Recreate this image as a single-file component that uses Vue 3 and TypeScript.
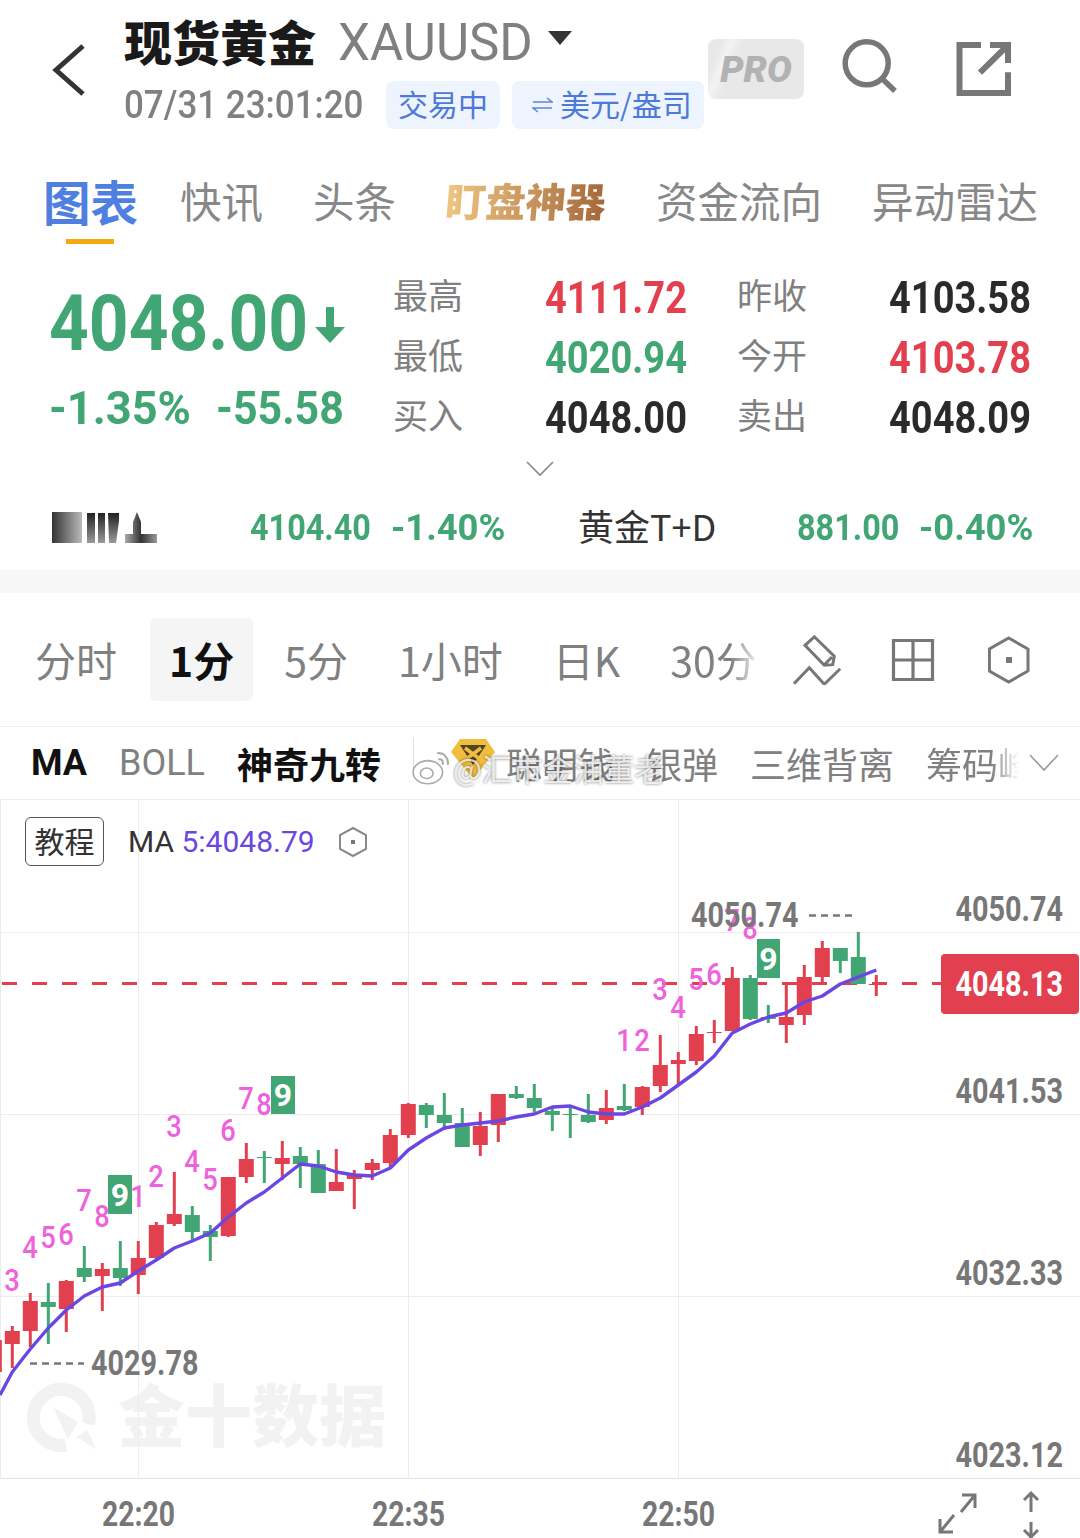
<template>
  <div class="page">
    <header class="head">
      <svg class="back" width="34" height="52" viewBox="0 0 34 52"><path d="M31 2 4 26l27 24" fill="none" stroke="#333" stroke-width="5" /></svg>
      <div class="head-main">
        <div class="title-row">
          <span class="title">现货黄金</span>
          <span class="symbol">XAUUSD</span>
          <i class="caret"></i>
        </div>
        <div class="sub-row">
          <span class="time-wrap"><span class="time">07/31 23:01:20</span></span>
          <span class="tag first">交易中</span>
          <span class="tag second">
            <svg width="21" height="16" viewBox="0 0 21 16"><path d="M1 5h19l-5-4M20 11H1l5 4" fill="none" stroke="#5f84d8" stroke-width="1.6" /></svg>
            美元/盎司
          </span>
        </div>
      </div>
      <div class="pro"><span>PRO</span></div>
      <svg class="act-search" width="56" height="54" viewBox="842 39 56 54"><circle cx="866.7" cy="63.3" r="21.5" fill="none" stroke="#777" stroke-width="5.5" /><path d="M881.7 78.3 895 91" stroke="#777" stroke-width="5.5" fill="none" /></svg>
      <svg class="act-share" width="56" height="54" viewBox="956 42 56 54"><path d="M981 45h-21.5v48H1008V72.3" fill="none" stroke="#777" stroke-width="6" /><path d="M980 72.7 1005 48M990 45h18v18" fill="none" stroke="#777" stroke-width="6" /></svg>
    </header>

    <nav class="tabs">
      <span class="tab active">图表</span>
      <span class="tab">快讯</span>
      <span class="tab">头条</span>
      <span class="tab gold">盯盘神器</span>
      <span class="tab">资金流向</span>
      <span class="tab">异动雷达</span>
    </nav>

    <section class="quote">
      <div class="price-box din-font">
        <div class="price">
          <span class="price-num">4048.00</span>
          <svg width="30" height="36" viewBox="0 0 30 36"><path d="M11 0h8v20h11L15 36 0 20h11z" fill="#41a673" /></svg>
        </div>
        <div class="change"><span class="pct">-1.35%</span><span class="amt">-55.58</span></div>
      </div>
      <div class="stats">
        <template v-for="s in stats" :key="s.label">
          <span class="s-label">{{ s.label }}</span>
          <span class="s-value din-font" :class="s.tone">{{ s.value }}</span>
        </template>
      </div>
    </section>

    <div class="more">
      <svg width="28" height="16" viewBox="0 0 28 16"><path d="m1 1 13 13L27 1" fill="none" stroke="#888" stroke-width="1.6" /></svg>
    </div>

    <section class="related">
      <svg class="blur-name" width="106" height="36" viewBox="0 0 106 36">
        <defs>
          <linearGradient id="b1" x1="0" x2="1" y1="0" y2="0"><stop offset="0" stop-color="#333" /><stop offset="1" stop-color="#bbb" /></linearGradient>
          <linearGradient id="b2" x1="0" x2="0" y1="0" y2="1"><stop offset="0" stop-color="#222" /><stop offset="1" stop-color="#999" /></linearGradient>
          <linearGradient id="b3" x1="0" x2="1" y1="0" y2="0"><stop offset="0" stop-color="#aaa" /><stop offset=".5" stop-color="#333" /><stop offset="1" stop-color="#999" /></linearGradient>
        </defs>
        <rect x="0" y="2" width="30" height="31" fill="url(#b1)" />
        <path d="M35 3h8v30h-8zM46 3h7v30h-7zM56 3h11v8l-3 22h-7z" fill="url(#b2)" />
        <path d="M73 33V24h8V12l4-10 4 10v12h16v9z" fill="url(#b3)" />
      </svg>
      <span class="r-num din-font first-num">4104.40</span>
      <span class="r-pct din-font">-1.40%</span>
      <span class="r-name">黄金T+D</span>
      <span class="r-num din-font second-num">881.00</span>
      <span class="r-pct din-font">-0.40%</span>
    </section>

    <div class="band"></div>

    <section class="periods">
      <span class="period">分时</span>
      <span class="period active">1分</span>
      <span class="period">5分</span>
      <span class="period">1小时</span>
      <span class="period">日K</span>
      <span class="period fade">30分</span>
      <svg class="t-pen" width="48" height="50" viewBox="792 633 48 50"><path d="M813.3 634.8 804 643.3l19.3 20 8.4-.6 1.6-8.4zM831 655l-7 7" fill="none" stroke="#777" stroke-width="3" /><path d="m793 681.7 15.3-16 15 16.6 16-15.6" fill="none" stroke="#777" stroke-width="3" /></svg>
      <svg class="t-grid" width="44" height="44" viewBox="890 638 44 44"><path d="M892.5 640.5h39v39h-39zM912 640.5v39M892.5 660h39" fill="none" stroke="#777" stroke-width="3.2" /></svg>
      <svg class="t-hex" width="42" height="48" viewBox="987 636 42 48"><path d="M1007.7 638 1027 649v22l-19.3 11-19.3-11v-22z" fill="none" stroke="#777" stroke-width="3" /><rect x="1005" y="657" width="6" height="6" fill="#777" /></svg>
    </section>

    <section class="indicators">
      <span class="ind strong latin">MA</span>
      <span class="ind latin">BOLL</span>
      <span class="ind strong">神奇九转</span>
      <i class="sep"></i>
      <svg class="medal" width="46" height="42" viewBox="0 0 46 42"><path d="M10 1h26l9 13-22 27L1 14z" fill="#f1bd3c" /><path d="M10 7h26l-13 20z" fill="#4f4426" /><path d="m15 10 16 12M31 10 15 22" stroke="#f1bd3c" stroke-width="3.5" /></svg>
      <span class="ind smart">聪明钱</span>
      <span class="ind">银弹</span>
      <span class="ind">三维背离</span>
      <span class="ind fade">筹码峰</span>
      <svg class="ind-more" width="30" height="18" viewBox="0 0 30 18"><path d="m1 1 14 15L29 1" fill="none" stroke="#999" stroke-width="1.6" /></svg>
      <div class="weibo">
        <svg width="40" height="36" viewBox="0 0 38 34"><ellipse cx="15" cy="21" rx="14" ry="11" fill="#fff" fill-opacity=".8" stroke="#aaa" stroke-width="1.5" /><ellipse cx="14" cy="22" rx="6" ry="5" fill="none" stroke="#aaa" stroke-width="1.5" /><path d="M24 3c6-1 11 4 10 11M25 9c3-1 5 1 4 5" fill="none" stroke="#aaa" stroke-width="2" /></svg>
        <span>@汇市金油董老</span>
      </div>
    </section>

    <section class="chart">
      <svg width="1080" height="738" viewBox="0 800 1080 738">
        <!-- watermark -->
        <path d="M88.5 1424A28 28 0 1 0 66 1445" fill="none" stroke="#f2f2f2" stroke-width="13" />
        <path d="M53 1407 78 1422l-10 17zM77 1437l10-7 10 20z" fill="#f2f2f2" />
        <text x="118" y="1441" class="mark">金十数据</text>

        <!-- grid -->
        <path v-for="y in hLines" :key="y" :d="`M0 ${y}H1080`" class="grid" />
        <path v-for="x in vLines" :key="x" :d="`M${x} 800V1478`" class="grid" />
        <path d="M0 1478.5H1080" class="axis" />

        <!-- price line -->
        <path d="M0 983.5H941" class="last-line" />

        <!-- candles -->
        <g v-for="(c, i) in candles" :key="i" :fill="c.up ? red : green" :stroke="c.up ? red : green">
          <path :d="`M${c.x} ${c.high}V${c.low}`" stroke-width="3" fill="none" />
          <rect :x="c.x - 7.5" :y="c.top" width="15" :height="Math.max(c.bottom - c.top, 1)" stroke="none" />
        </g>
        <path :d="maPath" fill="none" stroke="#6a46e2" stroke-width="3.4" stroke-linejoin="round" />

        <!-- nine turn marks -->
        <text v-for="(n, i) in marks" :key="'m' + i" :x="n[1]" :y="n[2]" class="mark-num">{{ n[0] }}</text>
        <g v-for="b in nines" :key="b.x">
          <rect :x="b.x" :y="b.y" :width="b.w" :height="b.h" :fill="green" />
          <text :x="b.x + b.w / 2" :y="b.y + b.h / 2 + 11" class="nine">9</text>
        </g>

        <!-- high low -->
        <text x="691" y="927" class="price-label">4050.74</text>
        <path d="M809 915.5h44" class="lead" />
        <path d="M30 1363.5h54" class="lead" />
        <text x="91" y="1375" class="price-label">4029.78</text>

        <!-- y axis -->
        <text v-for="l in yLabels" :key="l[0]" x="1063" :y="l[1]" class="y-label">{{ l[0] }}</text>
        <rect x="941" y="954" width="138" height="60" rx="4" :fill="red" />
        <text x="1063" y="996" class="y-label last-price">4048.13</text>

        <!-- x axis -->
        <text v-for="l in xLabels" :key="l[0]" :x="l[1]" y="1526" class="x-label">{{ l[0] }}</text>
        <path d="M940 1532 954 1515M940 1519v13h13M975 1495l-14 17M962 1495h13v13" fill="none" stroke="#777" stroke-width="3" />
        <path d="M1031 1512V1493M1024 1500l7-7 7 7M1031 1522v16M1024 1530l7 7 7-7" fill="none" stroke="#777" stroke-width="3" />
      </svg>
      <div class="legend">
        <span class="lesson"><span>教程</span></span>
        <span class="ma-text">MA <b>5:4048.79</b></span>
        <svg width="30" height="32" viewBox="0 0 30 32"><path d="M15 2 28 9v14l-13 7-13-7V9z" fill="none" stroke="#888" stroke-width="2" /><rect x="13" y="14" width="4" height="4" fill="#777" /></svg>
      </div>
    </section>
  </div>
</template>

<script setup lang="ts">
import { computed } from 'vue'

const red = '#e2404f'
const green = '#41a673'

const stats = [
  { label: '最高', value: '4111.72', tone: 'up' },
  { label: '昨收', value: '4103.58', tone: '' },
  { label: '最低', value: '4020.94', tone: 'down' },
  { label: '今开', value: '4103.78', tone: 'up' },
  { label: '买入', value: '4048.00', tone: '' },
  { label: '卖出', value: '4048.09', tone: '' },
]

const hLines = [932.5, 1114.5, 1296.5]
const vLines = [0.5, 138.5, 408.5, 678.5]

// [up, high, bodyTop, bodyBottom, low], one per minute, 18px apart
const raw: [number, number, number, number, number][] = [
  [1, 1326, 1331, 1344, 1368], [1, 1293, 1301, 1331, 1347], [0, 1283, 1302, 1307, 1344],
  [1, 1280, 1281, 1309, 1332], [0, 1246, 1268, 1277, 1282], [1, 1263, 1269, 1276, 1311],
  [0, 1241, 1268, 1278, 1286], [1, 1241, 1258, 1275, 1294], [1, 1222, 1225, 1258, 1260],
  [1, 1172, 1214, 1224, 1226], [0, 1206, 1215, 1232, 1240], [0, 1225, 1231, 1237, 1261],
  [1, 1177, 1177, 1236, 1237], [1, 1143, 1159, 1177, 1183], [0, 1151, 1157, 1158, 1183],
  [1, 1141, 1158, 1164, 1180], [0, 1147, 1156, 1164, 1188], [0, 1150, 1164, 1193, 1193],
  [1, 1149, 1182, 1191, 1191], [1, 1170, 1175, 1179, 1209], [1, 1159, 1163, 1170, 1180],
  [1, 1129, 1135, 1163, 1167], [1, 1103, 1104, 1135, 1138], [0, 1103, 1105, 1115, 1128],
  [0, 1093, 1115, 1123, 1130], [0, 1108, 1123, 1147, 1147], [1, 1112, 1126, 1145, 1156],
  [1, 1094, 1094, 1125, 1142], [0, 1086, 1094, 1098, 1099], [0, 1084, 1098, 1108, 1112],
  [0, 1107, 1111, 1115, 1131], [0, 1107, 1114, 1115, 1138], [0, 1094, 1115, 1122, 1123],
  [1, 1090, 1108, 1120, 1124], [0, 1084, 1106, 1110, 1111], [1, 1086, 1087, 1107, 1115],
  [1, 1035, 1065, 1086, 1092], [1, 1052, 1060, 1064, 1085], [1, 1026, 1034, 1061, 1065],
  [1, 1020, 1032, 1033, 1043], [1, 967, 978, 1031, 1031], [0, 975, 978, 1019, 1020],
  [0, 1005, 1017, 1019, 1023], [1, 984, 1017, 1025, 1043], [1, 965, 977, 1015, 1025],
  [1, 941, 948, 977, 982], [0, 948, 948, 961, 973], [0, 932, 957, 984, 984],
  [1, 975, 984, 985, 996],
]

const candles = [
  { up: true, x: -5.7, high: 1340, top: 1340, bottom: 1372, low: 1372 },
  ...raw.map((r, i) => ({ up: r[0] === 1, x: 12.3 + i * 18, high: r[1], top: r[2], bottom: r[3], low: r[4] })),
]

const ma = [
  1372, 1349, 1328, 1310, 1296, 1287, 1283, 1271, 1260, 1248, 1241, 1233, 1217, 1203, 1192, 1178,
  1164, 1166, 1172, 1175, 1176, 1168, 1150, 1138, 1128, 1125, 1123, 1121, 1117, 1114, 1107, 1106,
  1112, 1114, 1114, 1107, 1098, 1085, 1072, 1056, 1033, 1024, 1017, 1013, 1002, 996, 984, 977, 970,
]

const maPath = computed(() =>
  'M0 1395 ' + ma.map((y, i) => `L${(12.3 + i * 18).toFixed(1)} ${y}`).join(' ')
)

const marks: [string, number, number][] = [
  ['3', 12, 1291], ['4', 30, 1258], ['5', 48, 1248], ['6', 66, 1245], ['7', 84, 1211], ['8', 102, 1227],
  ['1', 138, 1207], ['2', 156, 1187], ['3', 174, 1137], ['4', 192, 1172], ['5', 210, 1190], ['6', 228, 1141],
  ['7', 246, 1109], ['8', 264, 1115], ['1', 624, 1051], ['2', 642, 1051], ['3', 660, 1000], ['4', 678, 1018],
  ['5', 696, 990], ['6', 714, 985], ['7', 732, 931], ['8', 750, 939],
]

const nines = [
  { x: 108, y: 1175, w: 24, h: 39 },
  { x: 271, y: 1076, w: 24, h: 38 },
  { x: 757, y: 939, w: 23, h: 39 },
]

const yLabels: [string, number][] = [['4050.74', 921], ['4041.53', 1103], ['4032.33', 1285], ['4023.12', 1467]]
const xLabels: [string, number][] = [['22:20', 138.5], ['22:35', 408.5], ['22:50', 678.5]]
</script>

<style>
html, body { margin: 0; background: #fff; }
</style>

<style scoped>
.page {
  width: 1080px; height: 1538px; overflow: hidden; background: #fff;
  font-family: "Noto Sans CJK SC", sans-serif; color: #222;
}
.din-font { font-family: Roboto, sans-serif; font-weight: 700; }

.head { height: 150px; box-sizing: border-box; display: flex; align-items: flex-start; }
.back { margin: 44px 0 0 52px; }
.head-main { margin-left: 38px; width: 584px; }
.title-row { display: flex; align-items: center; height: 62px; margin-top: 9px; }
.title { font-size: 48px; font-weight: 900; color: #1a1a1a; line-height: 62px; }
.symbol { font-family: Roboto, sans-serif; font-size: 51px; color: #808080; margin: 4px 0 0 22px; }
.caret { width: 0; height: 0; margin: -4px 0 0 15px; border: 12px solid transparent; border-top: 14px solid #333; border-bottom: 0; }
.sub-row { display: flex; align-items: center; margin-top: 10px; height: 48px; }
.time-wrap { width: 262px; flex: none; }
.time {
  display: inline-block; font-family: Roboto, sans-serif; font-size: 38px; font-weight: 500; color: #808080;
  white-space: nowrap; transform: scaleX(.92); transform-origin: left;
}
.tag {
  height: 48px; box-sizing: border-box; padding: 0 12px 4px; border-radius: 8px; background: #eef4fe;
  color: #4d79d8; font-size: 30px; display: flex; align-items: center; white-space: nowrap;
}
.tag.second { margin-left: 12px; padding-left: 20px; gap: 7px; padding-right: 12px; }
.tag svg { margin-top: 4px; }
.pro {
  margin: 39px 0 0 0; width: 96px; height: 60px; border-radius: 8px;
  background: linear-gradient(112deg, #e8e8e8 12%, #f3f3f3 20%, #e8e8e8 30%);
  display: flex; align-items: center; justify-content: center;
}
.pro span { font-family: Roboto, sans-serif; font-size: 37px; font-weight: 900; font-style: italic; color: #b2b2b2; }
.act-search { margin: 39px 0 0 38px; }
.act-share { margin: 42px 0 0 58px; }

.tabs { height: 96px; display: flex; align-items: center; gap: 50px; padding: 4px 0 0 43px; box-sizing: border-box; }
.tab { font-size: 41.5px; color: #888; position: relative; white-space: nowrap; }
.tab.active { font-size: 47.5px; font-weight: 700; color: #4f7fe0; margin-right: -8px; }
.tab.active::after {
  content: ""; position: absolute; left: 23px; bottom: -9px; width: 48px; height: 5px; background: #f5a80f;
}
.tab.gold {
  font-weight: 900; font-size: 40px; transform: skewX(-5deg);
  background: linear-gradient(90deg, #efc683, #a5673a); -webkit-background-clip: text; background-clip: text; color: transparent;
}

.quote { display: flex; padding-top: 21px; height: 201px; box-sizing: border-box; }
.price-box { width: 344px; padding-left: 49px; flex: none; color: #41a673; }
.price { height: 114px; display: flex; align-items: center; }
.price-num {
  width: 266px; flex: none; font-size: 78px; line-height: 114px; white-space: nowrap;
  transform: scaleX(.89); transform-origin: left;
}
.price svg { margin-top: 2px; }
.change { display: flex; font-size: 47px; line-height: 54px; }
.pct { width: 167px; flex: none; transform: scaleX(.96); transform-origin: left; }
.amt { transform: scaleX(.913); transform-origin: left; }
.stats {
  display: grid; grid-template-columns: 153px 141px 203px 141px;
  grid-auto-rows: 60px; align-items: center;
}
.s-label { font-size: 35px; color: #808080; margin-bottom: 7px; }
.s-label:nth-child(4n+3) { padding-left: 50px; }
.s-value {
  font-size: 45px; color: #2a2a2a; justify-self: end; white-space: nowrap;
  transform: scaleX(.845); transform-origin: right;
}
.s-value.up { color: #e2404f; }
.s-value.down { color: #41a673; }

.more { height: 44px; display: flex; justify-content: center; align-items: center; }

.related { height: 79px; box-sizing: border-box; padding: 0 0 5px 52px; display: flex; align-items: center; }
.blur-name { flex: none; }
.r-num, .r-pct { font-size: 36px; color: #41a673; white-space: nowrap; flex: none; transform-origin: left; }
.r-num { transform: scaleX(.9); }
.r-pct { width: 113px; margin-left: 21px; transform: scaleX(1.01); }
.first-num { width: 120px; margin-left: 92px; }
.r-name { width: 136px; flex: none; font-size: 36px; color: #333; margin: -6px 0 0 74px; white-space: nowrap; }
.second-num { width: 101px; margin-left: 83px; }

.band { height: 23px; background: #f7f7f7; }

.periods {
  height: 134px; box-sizing: border-box; border-bottom: 1px solid #ececec; display: flex; align-items: center;
  padding: 0 0 0 16px; gap: 12px;
}
.period { font-size: 41px; color: #808080; padding: 0 19px; height: 83px; line-height: 83px; border-radius: 6px; white-space: nowrap; flex: none; }
.period.active { background: #f5f5f5; color: #111; font-weight: 700; margin-left: 2px; }
.period.fade {
  width: 91px; padding-right: 0; overflow: hidden;
  -webkit-mask-image: linear-gradient(90deg, #000 72%, transparent); mask-image: linear-gradient(90deg, #000 72%, transparent);
}
.t-pen { margin-left: 20px; }
.t-grid { margin-left: 38px; }
.t-hex { margin-left: 41px; }

.indicators {
  height: 73px; box-sizing: border-box; border-bottom: 1px solid #ececec; display: flex; align-items: center;
  padding-left: 31px; gap: 32px; position: relative;
}
.ind { font-size: 36px; color: #808080; white-space: nowrap; flex: none; }
.ind.latin { font-family: Roboto, sans-serif; }
.ind.strong { color: #111; font-weight: 700; }
.sep { width: 1px; height: 36px; background: #e2e2e2; margin-top: -14px; flex: none; }
.medal { margin-left: 4px; margin-top: -8px; flex: none; }
.smart { margin-left: -22px; }
.ind.fade {
  width: 93px; overflow: hidden;
  -webkit-mask-image: linear-gradient(90deg, #000 70%, transparent); mask-image: linear-gradient(90deg, #000 70%, transparent);
}
.ind-more { margin-left: -22px; flex: none; }
.weibo {
  position: absolute; left: 412px; top: 19px; display: flex; align-items: center; gap: 1px;
  color: rgba(255, 255, 255, .78); font-size: 30.5px; text-shadow: 0 0 3px rgba(0, 0, 0, .55);
}

.chart { position: relative; height: 738px; }
.chart > svg { display: block; }
.grid { stroke: #ececec; stroke-width: 1; fill: none; }
.axis { stroke: #e4e4e4; stroke-width: 1; fill: none; }
.last-line { stroke: #e2404f; stroke-width: 3; stroke-dasharray: 15 15; stroke-dashoffset: 28; fill: none; }
.lead { stroke: #777; stroke-width: 2.5; stroke-dasharray: 7 5; fill: none; }
.mark { font-family: "Noto Sans CJK SC", sans-serif; font-size: 67px; font-weight: 900; fill: #f2f2f2; }
.mark-num {
  font-family: Roboto, sans-serif; font-size: 31px; font-weight: 500; fill: #ee62dc; text-anchor: middle;
  transform-box: fill-box; transform-origin: center; transform: scaleX(.88);
}
.nine { font-family: Roboto, sans-serif; font-size: 32px; font-weight: 700; fill: #fff; text-anchor: middle; }
.price-label, .y-label, .x-label {
  font-family: Roboto, sans-serif; font-size: 36px; font-weight: 700; fill: #777; transform-box: fill-box;
  transform: scaleX(.8);
}
.price-label { transform-origin: left center; }
.y-label { text-anchor: end; transform-origin: right center; }
.y-label.last-price { fill: #fff; }
.x-label { font-size: 35px; text-anchor: middle; transform-origin: center; transform: scaleX(.81); }

.legend { position: absolute; left: 25px; top: 17px; display: flex; align-items: center; }
.lesson {
  width: 79px; height: 49px; box-sizing: border-box; border: 1px solid #555; border-radius: 6px; background: #fff;
  font-size: 30px; color: #333; display: flex; align-items: center; justify-content: center; padding-bottom: 4px;
}
.ma-text { font-family: Roboto, sans-serif; font-size: 30px; color: #333; margin: 0 23px 0 24px; }
.ma-text b { font-weight: 400; color: #6a46e2; }
</style>
